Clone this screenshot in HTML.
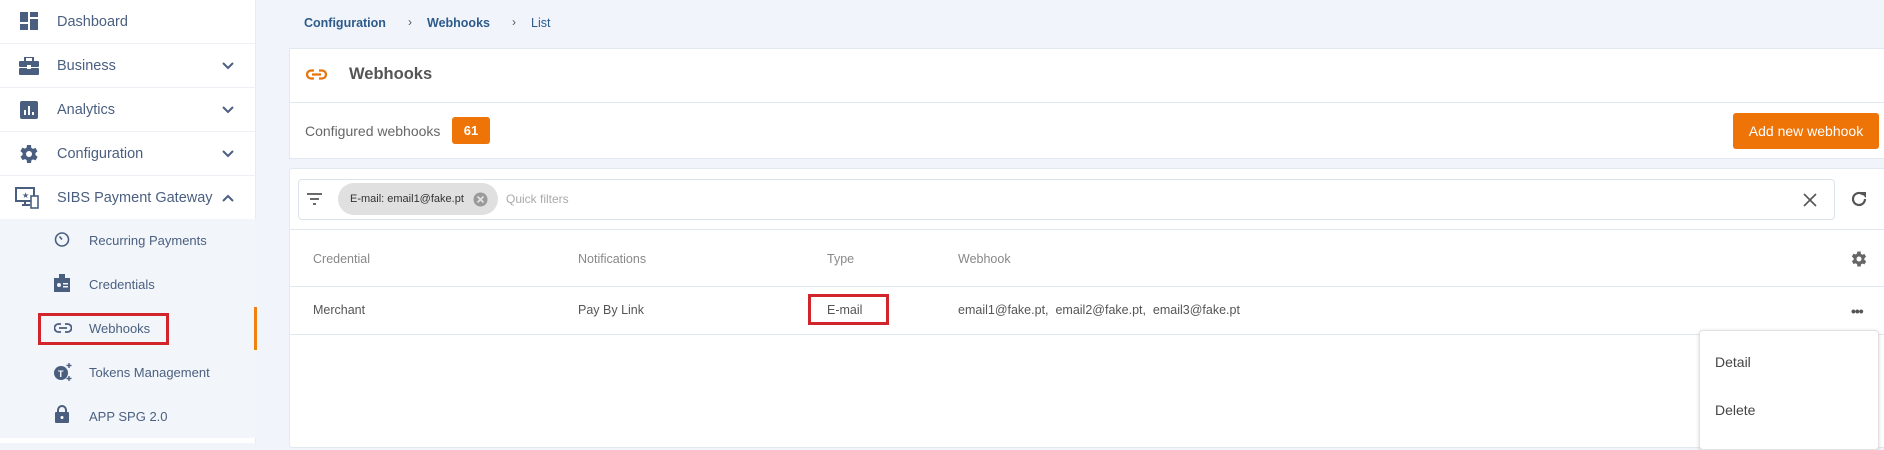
<!DOCTYPE html>
<html><head><meta charset="utf-8"><style>
*{box-sizing:border-box;margin:0;padding:0}
body{width:1884px;height:443px;overflow:hidden;background:#f1f5fb;font-family:"Liberation Sans",sans-serif;position:relative}
.a{position:absolute}
.sb{left:0;top:0;width:256px;height:443px;background:#fff;border-right:1px solid #e6ebf2}
.row{position:absolute;left:0;width:256px;height:44px;border-bottom:1px solid #edf0f4;color:#4a5f80;font-size:14.5px}
.row span{position:absolute;left:57px;top:14px}
.row svg{position:absolute}
.chev{position:absolute;left:221px;top:17px}
.sub{position:absolute;left:0;top:219px;width:256px;height:219px;background:#f2f6fa}
.si{position:absolute;left:89px;font-size:13px;color:#4a5f80}
.card{background:#fff;border:1px solid #e2e8f0}
.th{font-size:12.5px;color:#888}
.td{font-size:12.5px;color:#555}
</style></head><body>
<div class="a sb">
<div class="row" style="top:0"><svg style="left:20px;top:12px" width="18" height="18" viewBox="0 0 18 18" fill="#4a5f80"><rect x="0" y="0" width="8" height="10"/><rect x="10" y="0" width="8" height="5"/><rect x="10" y="7" width="8" height="11"/><rect x="0" y="12" width="8" height="6"/></svg><span>Dashboard</span></div>
<div class="row" style="top:44px"><svg style="left:19px;top:13px" width="20" height="18" viewBox="0 0 20 18" fill="#4a5f80"><rect x="6" y="0" width="8" height="5" fill="none" stroke="#4a5f80" stroke-width="2"/><rect x="0" y="4" width="20" height="6" rx="1"/><rect x="0" y="11" width="20" height="7" rx="1"/><rect x="8" y="8" width="4" height="4" fill="#fff"/></svg><span>Business</span><svg class="chev" width="14" height="10" viewBox="0 0 14 10"><path d="M2 2l5 5 5-5" fill="none" stroke="#4a5f80" stroke-width="2"/></svg></div>
<div class="row" style="top:88px"><svg style="left:20px;top:13px" width="18" height="18" viewBox="0 0 18 18"><rect width="18" height="18" rx="2" fill="#4a5f80"/><path d="M5 9v5M9 5v9M13 11v3" stroke="#fff" stroke-width="2"/></svg><span>Analytics</span><svg class="chev" width="14" height="10" viewBox="0 0 14 10"><path d="M2 2l5 5 5-5" fill="none" stroke="#4a5f80" stroke-width="2"/></svg></div>
<div class="row" style="top:132px"><svg style="left:17px;top:10px" width="24" height="24" viewBox="0 0 24 24"><path fill="#4a5f80" d="M19.4 13a7.5 7.5 0 000-2l2.1-1.6-2-3.5-2.5 1a7 7 0 00-1.7-1L15 3h-4l-.4 2.6a7 7 0 00-1.7 1l-2.5-1-2 3.5L6.6 11a7.5 7.5 0 000 2l-2.1 1.6 2 3.5 2.5-1a7 7 0 001.7 1L11 21h4l.4-2.6a7 7 0 001.7-1l2.5 1 2-3.5z" transform="translate(-1 0)"/><circle cx="12" cy="12" r="3" fill="#fff"/></svg><span>Configuration</span><svg class="chev" width="14" height="10" viewBox="0 0 14 10"><path d="M2 2l5 5 5-5" fill="none" stroke="#4a5f80" stroke-width="2"/></svg></div>
<div class="row" style="top:176px;border:none"><svg style="left:15px;top:11px" width="24" height="22" viewBox="0 0 24 22"><rect x="1" y="1" width="18" height="13" fill="none" stroke="#4a5f80" stroke-width="2"/><path d="M7 18h8M10 14v4" stroke="#4a5f80" stroke-width="2"/><rect x="16" y="9" width="7" height="12" fill="#fff" stroke="#4a5f80" stroke-width="1.6"/><text x="7" y="11" font-size="8" fill="#4a5f80">★</text></svg><span>SIBS Payment Gateway</span><svg class="chev" width="14" height="10" viewBox="0 0 14 10"><path d="M2 8l5-5 5 5" fill="none" stroke="#4a5f80" stroke-width="2"/></svg></div>
<div class="sub">
<svg class="a" style="left:54px;top:12px" width="16" height="16" viewBox="0 0 16 16"><circle cx="8" cy="8.5" r="6.5" fill="none" stroke="#4a5f80" stroke-width="1.6"/><path d="M8 8.5L5.5 5.5" stroke="#4a5f80" stroke-width="1.6"/></svg><div class="si" style="top:14px">Recurring Payments</div>
<svg class="a" style="left:54px;top:55px" width="16" height="18" viewBox="0 0 16 18" fill="#4a5f80"><rect y="4" width="16" height="14"/><rect x="5" y="0" width="6" height="6"/><circle cx="5" cy="11" r="2" fill="#f2f6fa"/><rect x="9" y="9" width="5" height="1.5" fill="#f2f6fa"/><rect x="9" y="12" width="5" height="1.5" fill="#f2f6fa"/></svg><div class="si" style="top:58px">Credentials</div>
<svg class="a" style="left:54px;top:104px" width="18" height="10" viewBox="0 0 18 10"><path d="M7 1H4.5a4 4 0 000 8H7M11 1h2.5a4 4 0 010 8H11M5 5h8" fill="none" stroke="#4a5f80" stroke-width="1.8"/></svg><div class="si" style="top:102px">Webhooks</div>
<svg class="a" style="left:53px;top:143px" width="20" height="20" viewBox="0 0 20 20"><circle cx="8" cy="11" r="7" fill="#4a5f80"/><text x="5" y="15" font-size="9" font-weight="bold" fill="#fff" font-family="Liberation Sans">T</text><path d="M16 1v5M13.5 3.5h5M16 14v5M13.5 16.5h5" stroke="#4a5f80" stroke-width="1.4"/></svg><div class="si" style="top:146px">Tokens Management</div>
<svg class="a" style="left:55px;top:186px" width="14" height="18" viewBox="0 0 14 18"><path d="M3 8V5a4 4 0 018 0v3" fill="none" stroke="#4a5f80" stroke-width="2"/><rect y="7" width="14" height="11" rx="1" fill="#4a5f80"/><circle cx="7" cy="12.5" r="1.5" fill="#fff"/></svg><div class="si" style="top:190px">APP SPG 2.0</div>
<div class="a" style="left:38px;top:94px;width:131px;height:32px;border:3px solid #d1242b"></div>
<div class="a" style="left:254px;top:88px;width:3px;height:43px;background:#f0830f"></div>
</div>
</div>
<div class="a" style="left:304px;top:16px;font-size:12.5px;font-weight:bold;color:#2e5a8a">Configuration</div>
<div class="a" style="left:408px;top:15px;font-size:12px;color:#555">›</div>
<div class="a" style="left:427px;top:16px;font-size:12.5px;font-weight:bold;color:#2e5a8a">Webhooks</div>
<div class="a" style="left:512px;top:15px;font-size:12px;color:#555">›</div>
<div class="a" style="left:531px;top:16px;font-size:12.5px;color:#2e5a8a">List</div>

<div class="a card" style="left:289px;top:48px;width:1600px;height:111px"></div>
<div class="a" style="left:289px;top:102px;width:1600px;height:1px;background:#e2e8f0"></div>
<svg class="a" style="left:306px;top:69px" width="21" height="11" viewBox="0 0 21 11"><path d="M8 1.5H5a4 4 0 000 8h3M13 1.5h3a4 4 0 010 8h-3M6 5.5h9" fill="none" stroke="#e8740c" stroke-width="2.2"/></svg>
<div class="a" style="left:349px;top:65px;font-size:16.5px;font-weight:bold;color:#555">Webhooks</div>
<div class="a" style="left:305px;top:123px;font-size:14px;color:#666">Configured webhooks</div>
<div class="a" style="left:452px;top:117px;width:38px;height:27px;background:#ee7407;border-radius:3px;color:#fff;font-size:13px;font-weight:bold;text-align:center;line-height:27px">61</div>
<div class="a" style="left:1733px;top:113px;width:146px;height:36px;background:#ee7407;border-radius:3px;color:#fff;font-size:14px;text-align:center;line-height:36px">Add new webhook</div>

<div class="a card" style="left:289px;top:168px;width:1600px;height:280px;border-radius:3px"></div>
<div class="a" style="left:298px;top:179px;width:1537px;height:41px;border:1px solid #dde3ea;border-radius:4px;background:#fff"></div>
<svg class="a" style="left:307px;top:193px" width="15" height="12" viewBox="0 0 15 12"><path d="M0 1h15M3 6h9M6 11h3" stroke="#555" stroke-width="1.8"/></svg>
<div class="a" style="left:338px;top:183px;width:160px;height:32px;background:#e0e0e0;border-radius:16px"></div>
<div class="a" style="left:350px;top:193px;font-size:11px;color:#333">E-mail: email1@fake.pt</div>
<svg class="a" style="left:473px;top:192px" width="15" height="15" viewBox="0 0 15 15"><circle cx="7.5" cy="7.5" r="7" fill="#9a9a9a"/><path d="M4.5 4.5l6 6M10.5 4.5l-6 6" stroke="#e0e0e0" stroke-width="1.8"/></svg>
<div class="a" style="left:506px;top:192px;font-size:12px;color:#aaa">Quick filters</div>
<svg class="a" style="left:1803px;top:193px" width="14" height="14" viewBox="0 0 14 14"><path d="M1 1l12 12M13 1L1 13" stroke="#555" stroke-width="1.6"/></svg>
<svg class="a" style="left:1850px;top:190px" width="18" height="18" viewBox="0 0 18 18"><path d="M15 9a6 6 0 11-2-4.5" fill="none" stroke="#555" stroke-width="2.2"/><path d="M10 2h6v6z" fill="#555"/></svg>
<div class="a" style="left:289px;top:229px;width:1600px;height:1px;background:#e2e8f0"></div>
<div class="a th" style="left:313px;top:252px">Credential</div>
<div class="a th" style="left:578px;top:252px">Notifications</div>
<div class="a th" style="left:827px;top:252px">Type</div>
<div class="a th" style="left:958px;top:252px">Webhook</div>
<svg class="a" style="left:1849px;top:249px" width="20" height="20" viewBox="0 0 24 24"><path fill="#666" d="M19.4 13a7.5 7.5 0 000-2l2.1-1.6-2-3.5-2.5 1a7 7 0 00-1.7-1L15 3h-4l-.4 2.6a7 7 0 00-1.7 1l-2.5-1-2 3.5L6.6 11a7.5 7.5 0 000 2l-2.1 1.6 2 3.5 2.5-1a7 7 0 001.7 1L11 21h4l.4-2.6a7 7 0 001.7-1l2.5 1 2-3.5z" transform="translate(-1 0)"/><circle cx="12" cy="12" r="3" fill="#fff"/></svg>
<div class="a" style="left:289px;top:286px;width:1600px;height:1px;background:#e2e8f0"></div>
<div class="a td" style="left:313px;top:303px">Merchant</div>
<div class="a td" style="left:578px;top:303px">Pay By Link</div>
<div class="a td" style="left:827px;top:303px">E-mail</div>
<div class="a td" style="left:958px;top:303px">email1@fake.pt,&nbsp; email2@fake.pt,&nbsp; email3@fake.pt</div>
<div class="a" style="left:808px;top:294px;width:81px;height:31px;border:3px solid #d1242b"></div>
<div class="a" style="left:1851px;top:303px;font-size:14px;color:#555;letter-spacing:-1px;font-weight:bold">•••</div>
<div class="a" style="left:289px;top:334px;width:1600px;height:1px;background:#e2e8f0"></div>
<div class="a" style="left:1699px;top:330px;width:180px;height:120px;background:#fff;border:1px solid #e2e2e2;border-radius:4px;box-shadow:0 1px 4px rgba(0,0,0,.15)"></div>
<div class="a" style="left:1715px;top:354px;font-size:14px;color:#444">Detail</div>
<div class="a" style="left:1715px;top:402px;font-size:14px;color:#444">Delete</div>
</body></html>
